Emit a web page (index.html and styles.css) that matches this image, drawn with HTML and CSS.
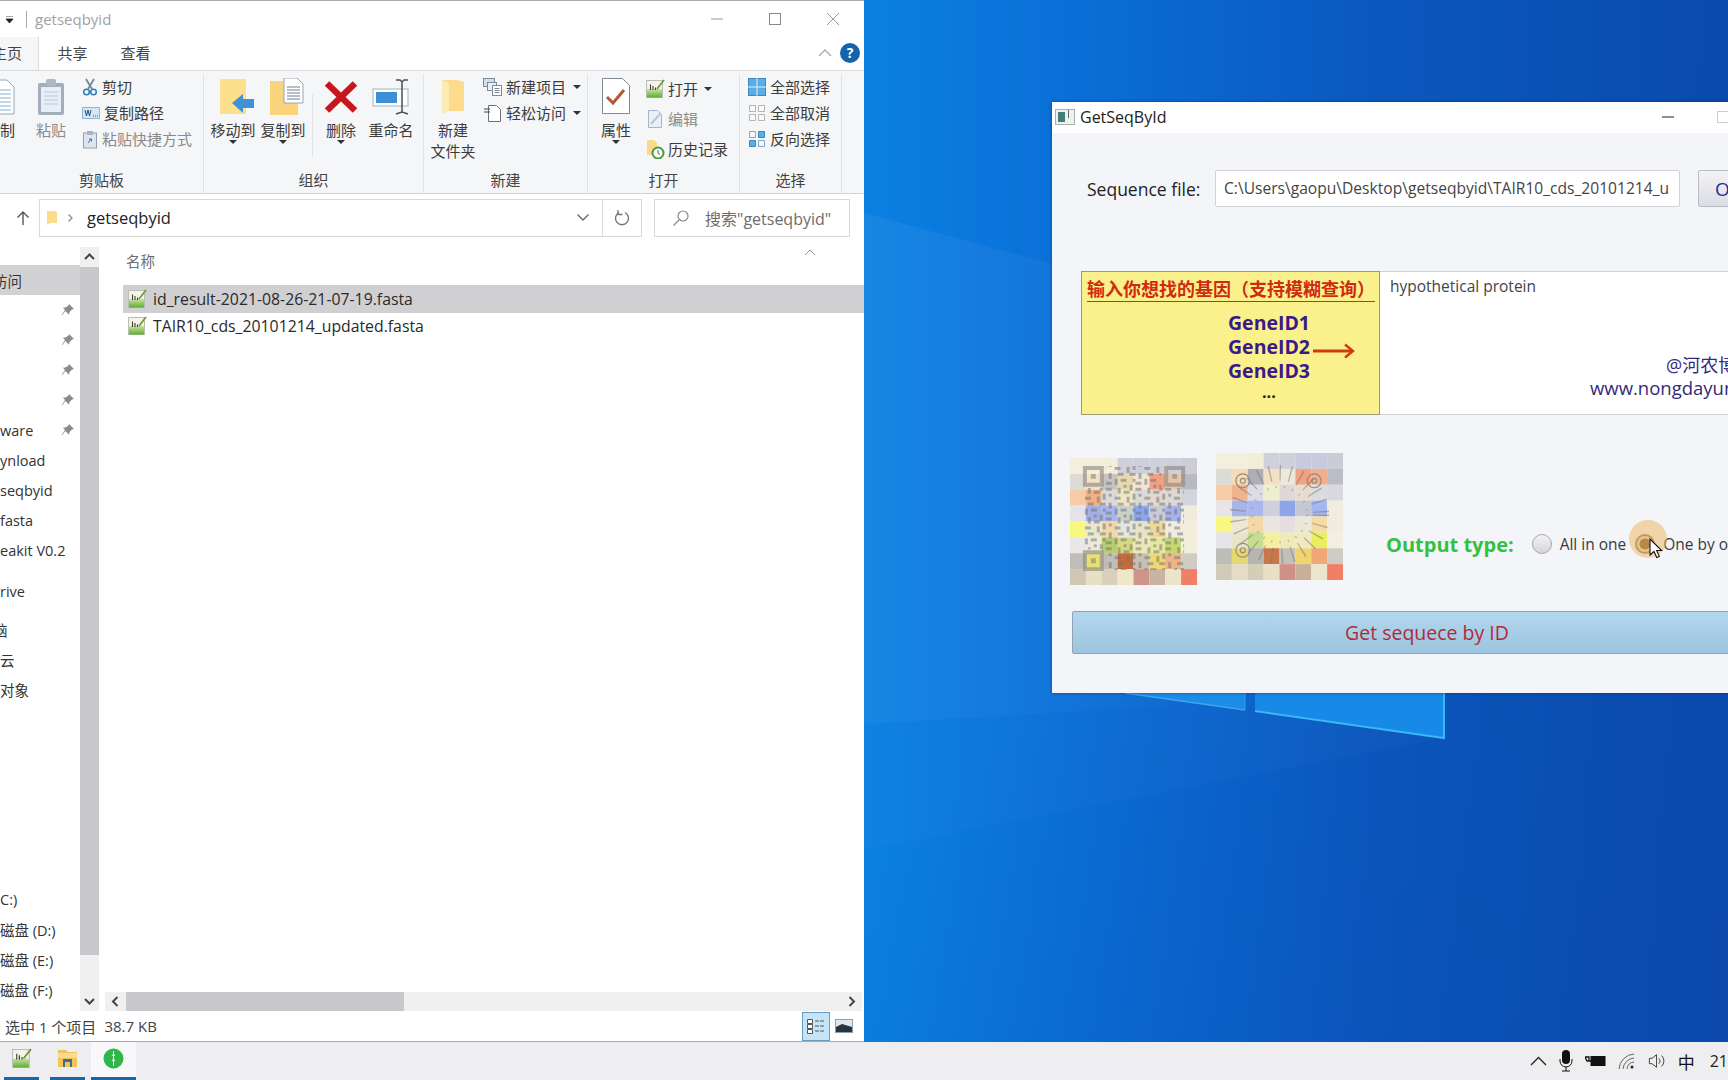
FILE: index.html
```html
<!DOCTYPE html>
<html lang="zh-CN">
<head>
<meta charset="utf-8">
<title>GetSeqById</title>
<link rel="stylesheet" href="styles.css">
</head>
<body>
<svg width="0" height="0" class="defs">
  <defs>
    <linearGradient id="fg" x1="0" y1="0" x2="0" y2="1">
      <stop offset="0" stop-color="#c9e3a4"/>
      <stop offset="1" stop-color="#5fae2e"/>
    </linearGradient>
    <symbol id="fasta" viewBox="0 0 20 20">
      <rect x="1.500" y="1.500" width="16" height="17" fill="#f4f4ea" stroke="#b9bdb2"/>
      <rect x="2" y="10" width="15" height="8.500" fill="url(#fg)"/>
      <path d="M5.500 11V5.500M8 11V7M10.500 11V8.500" stroke="#3b3f33" stroke-width="1.100" fill="none"/>
      <path d="M12 10 19 1" stroke="#6f9a3a" stroke-width="1.800" fill="none"/>
    </symbol>
    <symbol id="pin" viewBox="0 0 14 14">
      <path d="M8 1l5 5-2 .6-2.600 2.600-.3 2.600L4.300 8 1 12.500l0-1L4 7 1.900 4.800 4.500 4.400 7.300 2.800z" fill="#8b8b8b"/>
    </symbol>
    <symbol id="caret" viewBox="0 0 8 4"><path d="M0 0h8L4 4z" fill="#333"/></symbol>
  </defs>
</svg>

<svg class="wall" viewBox="0 0 1728 1080" width="1728" height="1080" aria-hidden="true">
  <defs>
    <linearGradient id="wb" x1="0" y1="0" x2="1" y2="0">
      <stop offset="0" stop-color="#fff" stop-opacity=".05"/>
      <stop offset="1" stop-color="#fff" stop-opacity=".01"/>
    </linearGradient>
  </defs>
  <path d="M864 213 1444 370V690L864 724z" fill="url(#wb)"/>
  <path d="M864 724 1444 690V738L864 850z" fill="#fff" opacity=".02"/>
  <path d="M1125 693H1245V710z" fill="#1b8ce8"/>
  <path d="M1255 693H1444V738L1255 711z" fill="#1789e6"/>
  <path d="M1125 693 1245 710" stroke="#3fa6ee" stroke-width="1.500"/>
  <path d="M1255 711 1444 738V693" stroke="#3cb6f4" stroke-width="2" fill="none"/>
  <path d="M1245 693V710" stroke="#2f9cea"/>
</svg>

<section class="explorer">
  <header class="ex-title">
    <svg class="qa-caret" width="9" height="7" viewBox="0 0 9 7"><path d="M1 0h7M1 3h7L4.500 7z" fill="#222" stroke="#222" stroke-width=".8"/></svg>
    <span class="ex-sep"></span>
    <span class="ex-name">getseqbyid</span>
    <span class="win-btns">
      <svg width="16" height="16" viewBox="0 0 16 16"><path d="M2 8h12" stroke="#999"/></svg>
      <svg width="16" height="16" viewBox="0 0 16 16"><rect x="2.500" y="2.500" width="11" height="11" fill="none" stroke="#888"/></svg>
      <svg width="16" height="16" viewBox="0 0 16 16"><path d="M2 2l12 12M14 2 2 14" stroke="#999" fill="none"/></svg>
    </span>
  </header>

  <nav class="ex-tabs">
    <span class="tab tab-on"><span class="tab-cut">主页</span></span>
    <span class="tab">共享</span>
    <span class="tab">查看</span>
    <span class="tab-tools">
      <svg width="16" height="10" viewBox="0 0 16 10"><path d="M2 8l6-6 6 6" stroke="#aaa" stroke-width="1.300" fill="none"/></svg>
      <span class="help">?</span>
    </span>
  </nav>

  <div class="ribbon">
    <section class="group g1">
      <div class="g-body">
        <div class="lg lg-copy">
          <svg class="ico" width="38" height="37" viewBox="0 0 38 37"><path d="M6 2h20l7 7v27H6z" fill="#fff" stroke="#9aa5b3"/><path d="M10 12h20M10 16h20M10 20h20M10 24h20M10 28h20M10 32h20" stroke="#7fb0d8"/></svg>
          <span>复制</span>
        </div>
        <div class="lg lg-paste dim">
          <svg class="ico" width="30" height="37" viewBox="0 0 30 37"><rect x="2" y="5" width="26" height="32" rx="2" fill="#a4adbc"/><rect x="5" y="9" width="20" height="25" fill="#e8eef7"/><path d="M8 14h14M8 18h14M8 22h14M8 26h14" stroke="#b9c8e0"/><rect x="10" y="1" width="10" height="7" rx="2" fill="#b0b7c4"/></svg>
          <span>粘贴</span>
        </div>
        <ul class="smalls s-clip">
          <li>
            <svg width="16" height="18" viewBox="0 0 16 18"><path d="M4 1l6 10M12 1 6 11" stroke="#7b8794" stroke-width="1.800"/><circle cx="4.500" cy="14" r="2.800" fill="none" stroke="#2f7fb6" stroke-width="1.500"/><circle cx="11.500" cy="14" r="2.800" fill="none" stroke="#2f7fb6" stroke-width="1.500"/></svg>
            <span>剪切</span>
          </li>
          <li>
            <svg width="18" height="12" viewBox="0 0 18 12"><rect x=".5" y=".5" width="17" height="11" fill="#d6e6f5" stroke="#8fb4d4"/><path d="M3 3l1.500 6L6 3l1.500 6L9 3" stroke="#22507d" fill="none"/><path d="M11 9h1M13 9h1M15 9h1" stroke="#555"/></svg>
            <span>复制路径</span>
          </li>
          <li class="dim">
            <svg width="16" height="19" viewBox="0 0 16 19"><rect x="1.500" y="3" width="13" height="15" fill="#dfe5ee" stroke="#94a0b2"/><rect x="5" y="1" width="6" height="4" fill="#aab3c0"/><path d="M6 13l3-4M7 9h2.500v2.500" stroke="#4d6f92" fill="none"/></svg>
            <span>粘贴快捷方式</span>
          </li>
        </ul>
      </div>
      <h3>剪贴板</h3>
    </section>

    <section class="group g2">
      <div class="g-body">
        <div class="lg w50">
          <svg class="ico shifted" width="36" height="37" viewBox="0 0 36 37"><path d="M1 1h26v35H1z" fill="#fde08c"/><path d="M13 25 24 16v5h11v9H24v5z" fill="#3f93d4"/></svg>
          <span>移动到</span>
          <svg class="cr" width="8" height="4"><use href="#caret"/></svg>
        </div>
        <div class="lg w50">
          <svg class="ico shifted" width="36" height="37" viewBox="0 0 36 37"><path d="M1 3h28v34H1z" fill="#fad47c"/><path d="M15 0h13l6 6v19H15z" fill="#fff" stroke="#9aa5b3"/><path d="M18 9h13M18 12h13M18 15h13M18 18h13M18 21h13" stroke="#6c7f93"/></svg>
          <span>复制到</span>
          <svg class="cr" width="8" height="4"><use href="#caret"/></svg>
        </div>
        <span class="g-sep"></span>
        <div class="lg w50">
          <svg class="ico" width="34" height="34" viewBox="0 0 34 34"><path d="M3 4 31 31M31 4 3 31" stroke="#c8161e" stroke-width="6.500" fill="none"/></svg>
          <span>删除</span>
          <svg class="cr" width="8" height="4"><use href="#caret"/></svg>
        </div>
        <div class="lg w50">
          <svg class="ico" width="38" height="37" viewBox="0 0 38 37"><rect x="1" y="11" width="35" height="17" fill="#fff" stroke="#9fb3c4"/><rect x="4" y="14" width="21" height="11" fill="#3c8fd6"/><path d="M24 2h4l2 2 2-2h4M30 4v30M24 36l6-2 6 2" stroke="#4a4f55" stroke-width="1.500" fill="none"/></svg>
          <span>重命名</span>
        </div>
      </div>
      <h3>组织</h3>
    </section>

    <section class="group g3">
      <div class="g-body">
        <div class="lg w58">
          <svg class="ico" width="26" height="37" viewBox="0 0 26 37"><path d="M2 2h15l7 2v29H8l-6 3z" fill="#fcdc8c"/><path d="M2 2v34l7-4V5z" fill="#fdebb4"/></svg>
          <span>新建<br>文件夹</span>
        </div>
        <ul class="smalls s-new">
          <li>
            <svg width="19" height="18" viewBox="0 0 19 18"><rect x=".5" y=".5" width="11" height="8" fill="#cfe0f0" stroke="#7f8a96"/><rect x="4.500" y="4.500" width="9" height="8" fill="#e9eff6" stroke="#7f8a96"/><rect x="9.500" y="7.500" width="9" height="10" fill="#fff" stroke="#7f8a96"/><path d="M11.500 10.500h5M11.500 12.500h5M11.500 14.500h5" stroke="#7f8a96"/></svg>
            <span>新建项目</span>
            <svg class="cr-in" width="8" height="4"><use href="#caret"/></svg>
          </li>
          <li>
            <svg width="19" height="18" viewBox="0 0 19 18"><path d="M5.500 1.500h8l4 4v12h-12z" fill="#fff" stroke="#6c737b"/><path d="M1 5h6M1 8h6" stroke="#444"/></svg>
            <span>轻松访问</span>
            <svg class="cr-in" width="8" height="4"><use href="#caret"/></svg>
          </li>
        </ul>
      </div>
      <h3>新建</h3>
    </section>

    <section class="group g4">
      <div class="g-body">
        <div class="lg w50">
          <svg class="ico" width="30" height="37" viewBox="0 0 30 37"><path d="M1.500.500h20l7 7v28h-27z" fill="#fff" stroke="#7f8a96"/><path d="M6 19l6 6L23 12" stroke="#b6573a" stroke-width="3" fill="none"/></svg>
          <span>属性</span>
          <svg class="cr" width="8" height="4"><use href="#caret"/></svg>
        </div>
        <ul class="smalls s-open">
          <li>
            <svg width="20" height="20"><use href="#fasta"/></svg>
            <span>打开</span>
            <svg class="cr-in" width="8" height="4"><use href="#caret"/></svg>
          </li>
          <li class="dim">
            <svg width="20" height="20" viewBox="0 0 20 20"><path d="M3.500 1.500h9l4 4v13h-13z" fill="#e9f0f8" stroke="#a9b5c3"/><path d="M6 15 15 5" stroke="#b8c6d6" stroke-width="2"/></svg>
            <span>编辑</span>
          </li>
          <li>
            <svg width="20" height="20" viewBox="0 0 20 20"><path d="M2 1h7l3 3v12H2z" fill="#fad98a"/><circle cx="13" cy="14" r="5.500" fill="#fff" stroke="#4a9a3e" stroke-width="2"/><path d="M13 11v3l2 1.500" stroke="#555" fill="none"/></svg>
            <span>历史记录</span>
          </li>
        </ul>
      </div>
      <h3>打开</h3>
    </section>

    <section class="group g5">
      <div class="g-body">
        <ul class="smalls s-sel">
          <li>
            <svg width="18" height="18" viewBox="0 0 18 18"><rect x=".5" y=".5" width="17" height="17" fill="#5aaee6" stroke="#3b86bd"/><path d="M9 0v18M0 9h18" stroke="#dff0fb"/></svg>
            <span>全部选择</span>
          </li>
          <li>
            <svg width="18" height="18" viewBox="0 0 18 18"><path d="M1.500 1.500h6v6h-6zM10.500 1.500h6v6h-6zM1.500 10.500h6v6h-6zM10.500 10.500h6v6h-6z" fill="#fafafa" stroke="#b5b5b5"/></svg>
            <span>全部取消</span>
          </li>
          <li>
            <svg width="18" height="18" viewBox="0 0 18 18"><path d="M10.500 1.500h6v6h-6zM1.500 10.500h6v6h-6z" fill="#5aaee6" stroke="#3b86bd"/><path d="M1.500 1.500h6v6h-6zM10.500 10.500h6v6h-6z" fill="#f5f8fb" stroke="#7fa9c8"/></svg>
            <span>反向选择</span>
          </li>
        </ul>
      </div>
      <h3>选择</h3>
    </section>
  </div>

  <div class="ex-addr">
    <svg class="up" width="14" height="16" viewBox="0 0 14 16"><path d="M7 15V2M1.500 7.500 7 2l5.500 5.500" stroke="#555" stroke-width="1.400" fill="none"/></svg>
    <div class="addr-box">
      <svg width="14" height="18" viewBox="0 0 14 18"><path d="M2 2h7l3 1v11H5l-3 2z" fill="#fbdb8c"/></svg>
      <svg class="chev" width="7" height="10" viewBox="0 0 7 10"><path d="M1.500 1.500 5 5 1.500 8.500" stroke="#888" stroke-width="1.200" fill="none"/></svg>
      <span class="addr-path">getseqbyid</span>
      <svg class="addr-down" width="14" height="9" viewBox="0 0 14 9"><path d="M1.500 1.500 7 7l5.500-5.500" stroke="#666" stroke-width="1.300" fill="none"/></svg>
    </div>
    <div class="addr-ref">
      <svg width="16" height="18" viewBox="0 0 16 18"><path d="M5 3.500a6.500 6.500 0 1 0 6 0" stroke="#777" stroke-width="1.400" fill="none"/><path d="M4 1v4.500h4.500" stroke="#777" stroke-width="1.300" fill="none"/></svg>
    </div>
    <div class="addr-search">
      <svg width="18" height="18" viewBox="0 0 18 18"><circle cx="11" cy="7" r="5" fill="none" stroke="#888" stroke-width="1.200"/><path d="M7 11 1.500 16.500" stroke="#888" stroke-width="1.200"/></svg>
      <span>搜索"getseqbyid"</span>
    </div>
  </div>

  <div class="ex-body">
    <aside class="ex-nav">
      <ul class="tree">
        <li class="on"><span class="cut9">访问</span></li>
        <li><svg class="pin" width="14" height="14"><use href="#pin"/></svg></li>
        <li><svg class="pin" width="14" height="14"><use href="#pin"/></svg></li>
        <li><svg class="pin" width="14" height="14"><use href="#pin"/></svg></li>
        <li><svg class="pin" width="14" height="14"><use href="#pin"/></svg></li>
        <li><span>ware</span><svg class="pin" width="14" height="14"><use href="#pin"/></svg></li>
        <li>ynload</li>
        <li>seqbyid</li>
        <li>fasta</li>
        <li>eakit V0.2</li>
        <li class="gap10">rive</li>
        <li class="gap8"><span class="cut9">脑</span></li>
        <li>云</li>
        <li>对象</li>
        <li class="gap-big">C:)</li>
        <li>磁盘 (D:)</li>
        <li>磁盘 (E:)</li>
        <li>磁盘 (F:)</li>
      </ul>
    </aside>
    <div class="vbar">
      <svg width="19" height="20" viewBox="0 0 19 20"><path d="M5 12l4.500-4.500L14 12" stroke="#444" stroke-width="2" fill="none"/></svg>
      <div class="vthumb"></div>
      <div class="vspace"></div>
      <svg width="19" height="20" viewBox="0 0 19 20"><path d="M5 8l4.500 4.500L14 8" stroke="#444" stroke-width="2" fill="none"/></svg>
    </div>
    <div class="files">
      <div class="f-head">
        <span>名称</span>
        <svg width="12" height="7" viewBox="0 0 12 7"><path d="M1 6l5-5 5 5" stroke="#999" fill="none"/></svg>
      </div>
      <ul class="f-list">
        <li class="sel"><svg width="20" height="20"><use href="#fasta"/></svg><span>id_result-2021-08-26-21-07-19.fasta</span></li>
        <li><svg width="20" height="20"><use href="#fasta"/></svg><span>TAIR10_cds_20101214_updated.fasta</span></li>
      </ul>
      <div class="hbar">
        <svg width="21" height="19" viewBox="0 0 21 19"><path d="M12.500 5 8 9.500l4.500 4.500" stroke="#444" stroke-width="2" fill="none"/></svg>
        <div class="hthumb"></div>
        <div class="hspace"></div>
        <svg width="21" height="19" viewBox="0 0 21 19"><path d="M8.500 5 13 9.500 8.500 14" stroke="#444" stroke-width="2" fill="none"/></svg>
      </div>
    </div>
  </div>

  <footer class="ex-status">
    <span>选中 1 个项目</span>
    <span>38.7 KB</span>
    <span class="views">
      <span class="v-on">
        <svg width="20" height="18" viewBox="0 0 20 18"><path d="M1.500 2.500h5v4h-5zM1.500 7.500h5v4h-5zM1.500 12.500h5v4h-5z" fill="#fff" stroke="#555"/><path d="M9 4h10M9 9h10M9 14h10" stroke="#555" stroke-dasharray="4 1"/></svg>
      </span>
      <svg width="18" height="14" viewBox="0 0 18 14"><rect x=".5" y=".5" width="17" height="13" fill="#dfe8ee" stroke="#8ea0ad"/><path d="M1 8l6-3 10 3v5H1z" fill="#28343d"/></svg>
    </span>
  </footer>
</section>

<section class="app">
  <header class="app-title">
    <svg width="20" height="16" viewBox="0 0 20 16"><rect x=".5" y=".5" width="19" height="15" fill="#eef1ef" stroke="#a9b0ae"/><rect x="3" y="3" width="7" height="10" fill="#3f7f78"/><rect x="13" y="1" width="1" height="8" fill="#666"/></svg>
    <span class="app-name">GetSeqById</span>
    <span class="app-btns">
      <svg width="12" height="12" viewBox="0 0 12 12"><path d="M0 6h12" stroke="#222"/></svg>
      <svg width="12" height="12" viewBox="0 0 12 12"><rect x=".5" y=".5" width="11" height="11" fill="none" stroke="#ccc"/></svg>
    </span>
  </header>
  <div class="app-main">
    <div class="seq-row">
      <label class="seq-label">Sequence file:</label>
      <div class="seq-input">C:\Users\gaopu\Desktop\getseqbyid\TAIR10_cds_20101214_u</div>
      <button class="open-btn">Open</button>
    </div>
    <div class="panel">
      <div class="hint">
        <div class="hint-head">输入你想找的基因（支持模糊查询）</div>
        <ul class="genes">
          <li>GeneID1</li>
          <li>GeneID2<svg class="arrow" width="42" height="16" viewBox="0 0 42 16"><path d="M0 8h39" stroke="#cf3a12" stroke-width="3"/><path d="M32 1.500 40 8l-8 6.500" stroke="#cf3a12" stroke-width="2.400" fill="none"/></svg></li>
          <li>GeneID3</li>
          <li class="dots">...</li>
        </ul>
      </div>
      <div class="ids">
        <div class="ids-text">hypothetical protein</div>
        <div class="credit">@河农博士</div>
        <div class="url">www.nongdayun.com</div>
      </div>
    </div>
    <div class="mid-row">
      <svg class="qr qr1" width="127" height="127" viewBox="0 0 128 128">
        <defs><pattern id="mods" width="30" height="30" patternUnits="userSpaceOnUse"><path d="M0 0h3v3H0zM6 0h6v3H6zM18 0h3v6h-3zM24 3h6v3h-6zM3 6h3v6H3zM9 6h3v3H9zM15 9h6v3h-6zM27 9h3v6h-3zM0 15h6v3H0zM9 15h3v6H9zM18 15h6v3h-6zM3 21h3v3H3zM15 21h3v6h-3zM21 21h6v3h-6zM6 24h6v3H6zM24 27h3v3h-3zM0 27h3v3H0z" fill="#6d6e74" opacity=".5"/></pattern></defs>
        <rect x="0" y="0" fill="#f4efdc"/><rect x="16" y="0" fill="#f4efdc"/><rect x="32" y="0" fill="#f2eeda"/><rect x="48" y="0" fill="#cfd0da"/><rect x="64" y="0" fill="#cdd0da"/><rect x="80" y="0" fill="#cfd0da"/><rect x="96" y="0" fill="#cfd0da"/><rect x="112" y="0" fill="#cbccd4"/>
        <rect x="0" y="16" fill="#dcdcd4"/><rect x="16" y="16" fill="#f3e2c4"/><rect x="32" y="16" fill="#c6c4c2"/><rect x="48" y="16" fill="#e8d8b0"/><rect x="64" y="16" fill="#efe6d2"/><rect x="80" y="16" fill="#f0a182"/><rect x="96" y="16" fill="#e8c4a8"/><rect x="112" y="16" fill="#b9b9c1"/>
        <rect x="0" y="32" fill="#f6cca6"/><rect x="16" y="32" fill="#f0b184"/><rect x="32" y="32" fill="#dcd9d6"/><rect x="48" y="32" fill="#f0e6c4"/><rect x="64" y="32" fill="#dcdad6"/><rect x="80" y="32" fill="#e2d9cc"/><rect x="96" y="32" fill="#dcdad6"/><rect x="112" y="32" fill="#d4d4dc"/>
        <rect x="0" y="48" fill="#e4e4e8"/><rect x="16" y="48" fill="#a4aee0"/><rect x="32" y="48" fill="#a9b6ea"/><rect x="48" y="48" fill="#c8d2c8"/><rect x="64" y="48" fill="#8da7ec"/><rect x="80" y="48" fill="#c8cbd6"/><rect x="96" y="48" fill="#a6b2ea"/><rect x="112" y="48" fill="#f0ecdc"/>
        <rect x="0" y="64" fill="#f8f880"/><rect x="16" y="64" fill="#e8e8d0"/><rect x="32" y="64" fill="#f0d8a8"/><rect x="48" y="64" fill="#e6e6e0"/><rect x="64" y="64" fill="#e8e2c8"/><rect x="80" y="64" fill="#f0d89a"/><rect x="96" y="64" fill="#f0ece0"/><rect x="112" y="64" fill="#f2eddc"/>
        <rect x="0" y="80" fill="#e8e8e8"/><rect x="16" y="80" fill="#ecead8"/><rect x="32" y="80" fill="#b8cc70"/><rect x="48" y="80" fill="#d8d880"/><rect x="64" y="80" fill="#eee8b8"/><rect x="80" y="80" fill="#e6e8a0"/><rect x="96" y="80" fill="#c8d870"/><rect x="112" y="80" fill="#f2eedc"/>
        <rect x="0" y="96" fill="#bfbdb8"/><rect x="16" y="96" fill="#e8e070"/><rect x="32" y="96" fill="#c2bdb8"/><rect x="48" y="96" fill="#c86a38"/><rect x="64" y="96" fill="#c8c0b0"/><rect x="80" y="96" fill="#f0d870"/><rect x="96" y="96" fill="#eeb488"/><rect x="112" y="96" fill="#cfccc6"/>
        <rect x="0" y="112" fill="#cfc7b4"/><rect x="16" y="112" fill="#e6e0c4"/><rect x="32" y="112" fill="#d8d0ba"/><rect x="48" y="112" fill="#f0e6c8"/><rect x="64" y="112" fill="#d0958a"/><rect x="80" y="112" fill="#c8b4a0"/><rect x="96" y="112" fill="#ece4c8"/><rect x="112" y="112" fill="#f07f66"/>
        <path d="M36 8H92V30H36zM13 30H115V92H13zM36 92H115V113H36z" fill="url(#mods)"/>
        <path d="M13 8h21v21H13zM17 12v13h13V12zM21 16h5v5h-5zM95 8h21v21H95zM99 12v13h13V12zM103 16h5v5h-5zM13 93h21v21H13zM17 97v13h13V97zM21 101h5v5h-5z" fill="#8d8b86" fill-rule="evenodd" opacity=".65"/>
      </svg>
      <svg class="qr qr2" width="127" height="127" viewBox="0 0 128 128">
        <rect x="0" y="0" fill="#f4efdc"/><rect x="16" y="0" fill="#f4efdc"/><rect x="32" y="0" fill="#f2eeda"/><rect x="48" y="0" fill="#cfd0da"/><rect x="64" y="0" fill="#d0d0da"/><rect x="80" y="0" fill="#c8cade"/><rect x="96" y="0" fill="#c8cade"/><rect x="112" y="0" fill="#ccccd6"/>
        <rect x="0" y="16" fill="#dcdcd4"/><rect x="16" y="16" fill="#f3dcb8"/><rect x="32" y="16" fill="#b0aeb4"/><rect x="48" y="16" fill="#f2e0c4"/><rect x="64" y="16" fill="#efe8da"/><rect x="80" y="16" fill="#f0a282"/><rect x="96" y="16" fill="#f0b090"/><rect x="112" y="16" fill="#bcbcc6"/>
        <rect x="0" y="32" fill="#f6cca6"/><rect x="16" y="32" fill="#f0b48c"/><rect x="32" y="32" fill="#dcdce4"/><rect x="48" y="32" fill="#f0eed0"/><rect x="64" y="32" fill="#e0d8d8"/><rect x="80" y="32" fill="#e8dcd0"/><rect x="96" y="32" fill="#dcdce0"/><rect x="112" y="32" fill="#d8d8de"/>
        <rect x="0" y="48" fill="#e8e4e8"/><rect x="16" y="48" fill="#a8b4e6"/><rect x="32" y="48" fill="#aab8ee"/><rect x="48" y="48" fill="#cfd0dc"/><rect x="64" y="48" fill="#90a4ea"/><rect x="80" y="48" fill="#c4c8d4"/><rect x="96" y="48" fill="#a6b6f0"/><rect x="112" y="48" fill="#f0ece0"/>
        <rect x="0" y="64" fill="#f8f880"/><rect x="16" y="64" fill="#eee8d0"/><rect x="32" y="64" fill="#f4d8a8"/><rect x="48" y="64" fill="#ece4e0"/><rect x="64" y="64" fill="#e4dee0"/><rect x="80" y="64" fill="#ece8d8"/><rect x="96" y="64" fill="#f4dca4"/><rect x="112" y="64" fill="#f0ece0"/>
        <rect x="0" y="80" fill="#e6e4e8"/><rect x="16" y="80" fill="#e8e4c8"/><rect x="32" y="80" fill="#c8dc90"/><rect x="48" y="80" fill="#f4f0a0"/><rect x="64" y="80" fill="#f0eab8"/><rect x="80" y="80" fill="#f0eac0"/><rect x="96" y="80" fill="#e8f060"/><rect x="112" y="80" fill="#f2eee0"/>
        <rect x="0" y="96" fill="#bdbdb8"/><rect x="16" y="96" fill="#e4d870"/><rect x="32" y="96" fill="#b8b4b0"/><rect x="48" y="96" fill="#c87848"/><rect x="64" y="96" fill="#c4c0b8"/><rect x="80" y="96" fill="#f0d470"/><rect x="96" y="96" fill="#f0a878"/><rect x="112" y="96" fill="#cfccc6"/>
        <rect x="0" y="112" fill="#d0cab8"/><rect x="16" y="112" fill="#e4dcc4"/><rect x="32" y="112" fill="#d4cdb8"/><rect x="48" y="112" fill="#e8dfc4"/><rect x="64" y="112" fill="#d09088"/><rect x="80" y="112" fill="#c8b098"/><rect x="96" y="112" fill="#ece4cc"/><rect x="112" y="112" fill="#f07f66"/>
        <circle cx="64" cy="62" r="42" fill="none" stroke="#77787c" stroke-width="16" stroke-dasharray="1.400 9" opacity=".5"/>
        <circle cx="64" cy="62" r="28" fill="none" stroke="#77787c" stroke-width="2.500" stroke-dasharray="1.500 7" opacity=".35"/>
        <g fill="none" stroke="#9a8b78" stroke-width="1.200"><circle cx="27" cy="28" r="7"/><circle cx="27" cy="28" r="2.500"/><circle cx="99" cy="28" r="7"/><circle cx="99" cy="28" r="2.500"/><circle cx="27" cy="98" r="7"/><circle cx="27" cy="98" r="2.500"/></g>
      </svg>
      <div class="output">
        <span class="out-label">Output type:</span>
        <span class="radio"></span>
        <span class="radio-text">All in one</span>
        <span class="radio radio-on"></span>
        <span class="radio-text">One by one</span>
      </div>
    </div>
    <button class="run-btn">Get sequece by ID</button>
  </div>
</section>

<div class="click-ring"></div>
<svg class="cursor" width="14" height="22" viewBox="0 0 14 22"><path d="M1 1v16l4-3.500 2.700 6 2.600-1.100-2.600-5.900h5z" fill="#fff" stroke="#111" stroke-width="1.100"/></svg>

<footer class="taskbar">
  <span class="task t1"><svg width="21" height="21"><use href="#fasta"/></svg></span>
  <span class="task t2">
    <svg width="21" height="20" viewBox="0 0 21 20"><path d="M1 2h8l2 2h9v15H1z" fill="#f3c35a"/><path d="M1 5h19v5H1z" fill="#f9dc8f"/><path d="M6 11h9v8h-2v-5H8v5H6z" fill="#3f6f8f"/></svg>
  </span>
  <span class="task t3">
    <svg width="21" height="21" viewBox="0 0 21 21"><circle cx="10.500" cy="10.500" r="10" fill="#2fb54a"/><path d="M10.500 3v15M9 8l1.500-2L12 8M9 13l1.500-2 1.500 2" stroke="#dff5e2" fill="none"/></svg>
  </span>
  <span class="tray">
    <svg width="17" height="10" viewBox="0 0 17 10"><path d="M1 9l7.500-7.500L16 9" stroke="#222" stroke-width="1.300" fill="none"/></svg>
    <svg width="14" height="22" viewBox="0 0 14 22"><rect x="3" y="0" width="8" height="14" rx="4" fill="#111"/><path d="M1 9v2a6 6 0 0 0 12 0V9M7 17v4M3 21h8" stroke="#111" fill="none"/></svg>
    <svg width="21" height="12" viewBox="0 0 21 12"><rect x="6" y="1.500" width="14" height="9" fill="#111" stroke="#111"/><path d="M0 2h4v4H2zM4 6h2" stroke="#111" stroke-width="1.300" fill="none"/></svg>
    <svg width="18" height="18" viewBox="0 0 18 18"><path d="M1 17A16 16 0 0 1 16 2M5 17A12 12 0 0 1 16 6M9 17a8 8 0 0 1 7-7" stroke="#666" fill="none"/><circle cx="14" cy="15" r="1.500" fill="#222"/></svg>
    <svg width="18" height="18" viewBox="0 0 20 18"><path d="M1.500 6h3l5-4v14l-5-4h-3z" fill="none" stroke="#333"/><path d="M12 6a4 4 0 0 1 0 6M15 3a8 8 0 0 1 0 12" stroke="#333" fill="none"/></svg>
    <span class="ime">中</span>
    <span class="clock">21</span>
  </span>
</footer>
</body>
</html>
```

FILE: styles.css
```css
* { box-sizing: border-box; }
html, body { margin: 0; height: 100%; }
body {
  position: relative;
  width: 1728px;
  height: 1080px;
  overflow: hidden;
  font-family: "Open Sans", "Noto Sans CJK SC", sans-serif;
  font-size: 15px;
  color: #333;
  background:
    linear-gradient(135deg, rgba(14, 140, 235, 0) 62%, rgba(10, 70, 170, .35) 100%),
    linear-gradient(90deg, #0b80e2 50%, #0a6fd8 62%, #0a58be 80%, #0a4aae 100%);
}
ul { list-style: none; margin: 0; padding: 0; }
h3 { margin: 0; font-weight: 400; }
.defs { position: absolute; }
.wall { position: absolute; left: 0; top: 0; }

/* explorer */
.explorer {
  position: absolute;
  left: 0;
  top: 0;
  width: 864px;
  height: 1042px;
  display: flex;
  flex-direction: column;
  background: #fff;
  border-top: 1px solid #aaa;
  overflow: hidden;
}
.ex-title { height: 36px; display: flex; align-items: center; flex: none; padding-left: 5px; }
.qa-caret { margin-right: 12px; }
.ex-sep { width: 1px; height: 17px; background: #aaa; }
.ex-name { margin-left: 8px; color: #a2a2a2; font-size: 15px; }
.win-btns { margin-left: auto; display: flex; gap: 42px; padding-right: 23px; }

.ex-tabs { height: 33px; flex: none; display: flex; align-items: center; font-size: 15px; color: #444; padding-bottom: 2px; }
.tab { width: 63px; text-align: center; }
.tab-on {
  width: 39px;
  align-self: stretch;
  display: flex;
  align-items: center;
  justify-content: flex-end;
  background: #f5f6f7;
  border-right: 1px solid #dadbdc;
  margin-right: 2px;
  margin-bottom: -2px;
  overflow: hidden;
  white-space: nowrap;
  padding-right: 16px;
  padding-bottom: 2px;
}
.tab-cut { flex: none; }
.tab-tools { margin-left: auto; display: flex; align-items: center; gap: 7px; padding-right: 4px; }
.help {
  width: 20px;
  height: 20px;
  border-radius: 50%;
  background: #1464ac;
  color: #fff;
  font-weight: 700;
  font-size: 14px;
  line-height: 20px;
  text-align: center;
}

.ribbon {
  height: 124px;
  flex: none;
  display: flex;
  background: #f5f6f7;
  border-top: 1px solid #dadbdc;
  border-bottom: 1px solid #d4d5d6;
  font-size: 15px;
  line-height: 21px;
  color: #3c3c3c;
}
.group {
  display: flex;
  flex-direction: column;
  border-right: 1px solid #e1e2e3;
  margin-top: 3px;
  margin-bottom: 0;
}
.g1 { width: 204px; }
.g2 { width: 220px; }
.g3 { width: 164px; }
.g4 { width: 152px; }
.g5 { width: 102px; }
.g-body { flex: 1; display: flex; min-height: 0; }
.group h3 { font-size: 15px; line-height: 21px; height: 27px; padding-top: 4px; text-align: center; color: #444; }

.lg { display: flex; flex-direction: column; align-items: center; text-align: center; padding-top: 4px; flex: none; position: relative; }
.lg .ico { height: 37px; margin-bottom: 5px; flex: none; }
.lg .ico.shifted { margin-left: 8px; }
.lg .cr { margin-top: -1px; }
.lg-copy { width: 44px; margin-left: -22px; }
.lg-paste { width: 44px; margin-left: 7px; }
.w50 { width: 50px; }
.w58 { width: 58px; }
.g2 .g-body { padding-left: 4px; }
.g-sep { width: 1px; height: 62px; margin: 20px 3px 0 4px; background: #e1e2e3; flex: none; }
.g4 .g-body { padding-left: 3px; }
.dim { color: #8a8a8a; }

.smalls { display: flex; flex-direction: column; }
.smalls li { height: 26px; display: flex; align-items: center; gap: 4px; white-space: nowrap; }
.smalls li svg:first-child { flex: none; }
.s-clip { margin-left: 9px; }
.s-new { margin-left: 1px; }
.s-open { margin-left: 4px; }
.s-open li { height: 30px; gap: 3px; }
.s-sel { margin-left: 8px; }
.cr-in { margin-left: 3px; }

.ex-addr { height: 47px; flex: none; display: flex; align-items: center; padding-left: 16px; }
.up { margin-right: 9px; }
.addr-box {
  width: 564px;
  height: 38px;
  border: 1px solid #d9d9d9;
  display: flex;
  align-items: center;
  padding-left: 5px;
  gap: 8px;
}
.addr-path { margin-left: 5px; color: #222; font-size: 16.500px; }
.addr-down { margin-left: auto; margin-right: 12px; }
.addr-ref {
  width: 39px;
  height: 38px;
  border: 1px solid #d9d9d9;
  border-left: 0;
  display: flex;
  align-items: center;
  justify-content: center;
}
.addr-search {
  width: 196px;
  height: 38px;
  margin-left: 12px;
  border: 1px solid #d9d9d9;
  display: flex;
  align-items: center;
  padding-left: 17px;
  gap: 15px;
  color: #6d6d6d;
  font-size: 16px;
  white-space: nowrap;
}

.ex-body { flex: 1; display: flex; min-height: 0; }
.ex-nav { width: 80px; flex: none; overflow: hidden; padding-top: 24px; color: #333; font-size: 14.500px; }
.tree li {
  height: 30px;
  display: flex;
  align-items: center;
  white-space: nowrap;
  position: relative;
}
.tree .on { background: #d2d2d4; }
.tree .pin { position: absolute; left: 61px; top: 8px; }
.cut9 { margin-left: -7px; }
.gap10 { margin-top: 11px; }
.gap8 { margin-top: 8px; }
.gap-big { margin-top: 180px; }

.vbar { width: 19px; flex: none; background: #f0f0f1; display: flex; flex-direction: column; margin-top: 6px; }
.vbar svg { flex: none; }
.vthumb { height: 688px; background: #c8c8cc; }
.vspace { flex: 1; }

.files { flex: 1; min-width: 0; display: flex; flex-direction: column; }
.f-head {
  height: 44px;
  padding-left: 27px;
  padding-right: 48px;
  padding-top: 9px;
  display: flex;
  justify-content: space-between;
  color: #6d6d6d;
  font-size: 14.500px;
}
.f-head svg { margin-top: -1px; }
.f-list { flex: 1; padding-left: 24px; font-size: 15.800px; color: #2a2a2a; }
.f-list li { height: 27.500px; display: flex; align-items: center; gap: 6px; padding-left: 4px; white-space: nowrap; }
.f-list .sel { background: #d0d0d2; }
.hbar { height: 19px; flex: none; margin-left: 6px; margin-right: 2px; background: #f0f0f1; display: flex; }
.hthumb { width: 278px; background: #c8c8cc; }
.hspace { flex: 1; }
.hbar svg { flex: none; }

.ex-status {
  height: 31px;
  flex: none;
  display: flex;
  align-items: center;
  padding-left: 5px;
  gap: 8px;
  border-bottom: 1px solid #a9a9a9;
  color: #444;
  font-size: 15px;
}
.views { margin-left: auto; display: flex; align-items: center; gap: 5px; padding-right: 11px; }
.v-on {
  width: 28px;
  height: 29px;
  background: #c6e4f8;
  border: 1px solid #6b9bbf;
  display: flex;
  align-items: center;
  justify-content: center;
}

/* app window */
.app {
  position: absolute;
  left: 1052px;
  top: 102px;
  width: 750px;
  height: 591px;
  background: #f4f5f8;
  box-shadow: 0 0 3px rgba(0, 40, 90, .6);
  display: flex;
  flex-direction: column;
  font-size: 15px;
}
.app-title { height: 31px; flex: none; display: flex; align-items: center; background: #fff; padding: 0 0 2px 3px; }
.app-name { margin-left: 5px; color: #222; font-size: 16px; }
.app-btns { margin-left: auto; display: flex; gap: 43px; padding-right: 73px; }
.app-main { flex: 1; display: flex; flex-direction: column; }
.seq-row { display: flex; align-items: center; height: 37px; margin-top: 37px; padding-left: 35px; }
.seq-label { width: 128px; flex: none; font-size: 17.500px; color: #222; white-space: nowrap; }
.seq-input {
  width: 465px;
  height: 37px;
  flex: none;
  padding: 0 8px;
  background: #fff;
  border: 1px solid #d0d2d6;
  border-radius: 2px;
  line-height: 35px;
  font-size: 15.600px;
  color: #444;
  white-space: nowrap;
  overflow: hidden;
}
.open-btn {
  margin-left: 18px;
  height: 37px;
  width: 80px;
  flex: none;
  background: linear-gradient(#f3f3f6, #dcdde2);
  border: 1px solid #b9bcc4;
  border-radius: 2px;
  color: #2a2aa0;
  font: 19px "Open Sans", sans-serif;
  text-align: left;
  padding-left: 16px;
}
.panel { display: flex; height: 144px; margin: 64px 0 0 29px; width: 701px; flex: none; }
.hint {
  width: 299px;
  flex: none;
  background: #fbf18c;
  border: 1px solid #9a9a78;
  padding: 5px 4px 0 5px;
}
.hint-head {
  font-family: "Noto Sans CJK SC", sans-serif;
  font-weight: 700;
  font-size: 18px;
  line-height: 23px;
  color: #cf2a12;
  border-bottom: 1.500px solid #b04010;
  white-space: nowrap;
  height: 25px;
}
.genes {
  margin-left: 141px;
  margin-top: 9px;
  font-weight: 700;
  font-size: 19.500px;
  line-height: 24px;
  color: #3a1a8a;
}
.genes li { display: flex; align-items: center; white-space: nowrap; }
.arrow { margin-left: 3px; margin-top: 8px; }
.genes .dots { padding-left: 34px; color: #222; font-size: 16px; line-height: 18px; padding-bottom: 8px; }
.ids {
  flex: 1;
  background: #fff;
  border: 1px solid #cfd1d5;
  border-left: 0;
  padding-left: 10px;
  overflow: hidden;
  white-space: nowrap;
}
.ids-text { font-size: 15.500px; line-height: 20px; padding-top: 4px; color: #444; height: 81px; }
.credit { margin-left: 276px; font-size: 18px; line-height: 24px; color: #35297a; }
.url { margin-left: 200px; font-size: 18.500px; line-height: 22px; color: #35297a; }

.mid-row { display: flex; align-items: flex-end; height: 132px; margin: 38px 0 0 18px; flex: none; }
.qr { flex: none; }
.qr rect { width: 16px; height: 16px; }
.qr1 { align-self: flex-end; }
.qr2 { margin: 0 0 5px 19px; }
.output { display: flex; align-items: center; height: 30px; margin: 0 0 26px 43px; white-space: nowrap; }
.out-label { color: #33c13f; font-weight: 700; font-size: 20px; margin-right: 18px; }
.radio {
  width: 20px;
  height: 20px;
  flex: none;
  border-radius: 50%;
  background: linear-gradient(#f3f3f3, #d6d6d8);
  border: 1px solid #a8a8ac;
}
.radio-on {
  background: radial-gradient(circle, #7f6136 0 5px, #e6d9bd 6px);
  border: 2px solid #88836e;
}
.radio-text { font-size: 15.500px; color: #3a3a3a; margin: 0 9px 0 8px; }
.run-btn {
  width: 710px;
  height: 43px;
  margin: 26px 0 0 20px;
  flex: none;
  border: 1px solid #8ea4b4;
  border-radius: 2px;
  background: linear-gradient(#b3d8ee, #9cc4de);
  color: #b02a3c;
  font: 19.500px "Open Sans", sans-serif;
}

.click-ring {
  position: absolute;
  left: 1629px;
  top: 520px;
  width: 38px;
  height: 38px;
  border-radius: 50%;
  background: rgba(240, 180, 90, .5);
}
.cursor { position: absolute; left: 1649px; top: 538px; }

/* taskbar */
.taskbar {
  position: absolute;
  left: 0;
  right: 0;
  bottom: 0;
  height: 38px;
  background: #eeeef0;
  display: flex;
  align-items: stretch;
  padding-left: 4px;
}
.task {
  width: 35px;
  display: flex;
  align-items: center;
  justify-content: center;
  padding-bottom: 3px;
  border-bottom: 3px solid #1668a8;
}
.t1 { margin-right: 11px; }
.t2 { margin-right: 6px; }
.t3 { width: 45px; background: #f8f8fa; }
.tray { margin-left: auto; display: flex; align-items: center; gap: 12px; }
.ime { font-size: 17px; color: #111; margin-left: 0; font-family: "Noto Sans CJK SC", sans-serif; }
.clock { font-size: 16px; color: #222; margin-left: 3px; }
```
